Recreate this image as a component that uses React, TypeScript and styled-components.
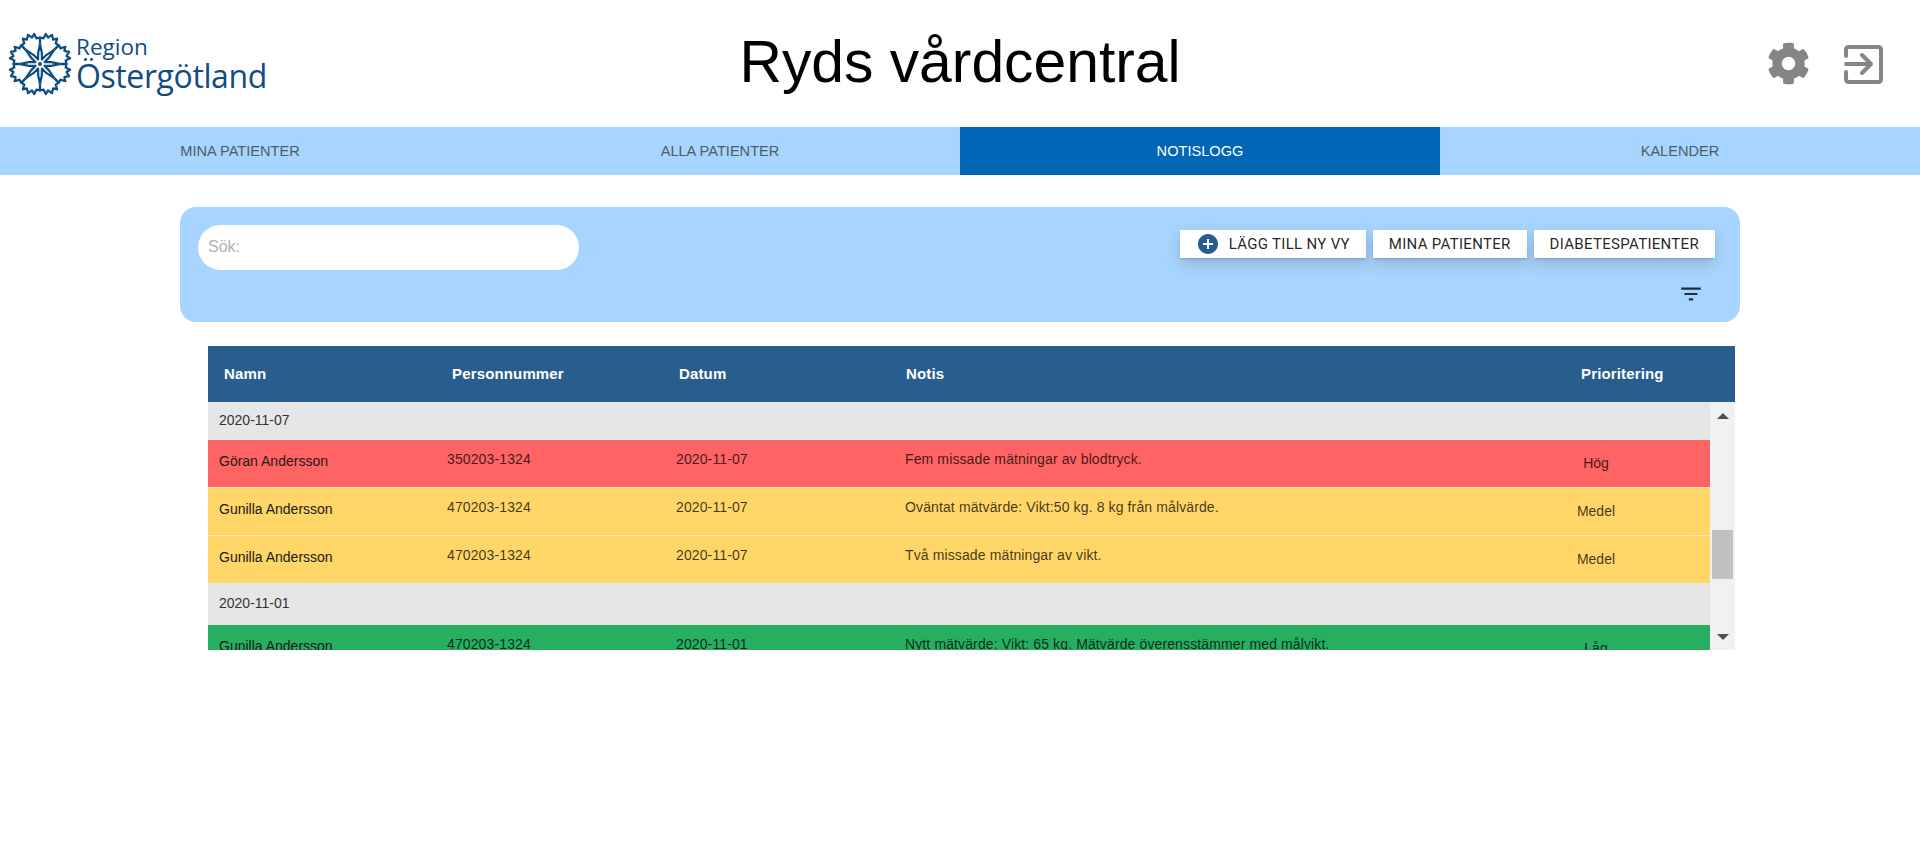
import React from 'react'
import styled, { createGlobalStyle } from 'styled-components'
import { FaCog } from 'react-icons/fa'
import { MdAddCircle, MdFilterList } from 'react-icons/md'

const tabs = ['Mina patienter', 'Alla patienter', 'Notislogg', 'Kalender']

type Level = 'high' | 'mid' | 'low'

const groups: { date: string; height: number; rows: { name: string; id: string; note: string; level: Level; label: string }[] }[] = [
	{
		date: '2020-11-07',
		height: 38,
		rows: [
			{ name: 'Göran Andersson', id: '350203-1324', note: 'Fem missade mätningar av blodtryck.', level: 'high', label: 'Hög' },
			{ name: 'Gunilla Andersson', id: '470203-1324', note: 'Oväntat mätvärde: Vikt:50 kg. 8 kg från målvärde.', level: 'mid', label: 'Medel' },
			{ name: 'Gunilla Andersson', id: '470203-1324', note: 'Två missade mätningar av vikt.', level: 'mid', label: 'Medel' },
		],
	},
	{
		date: '2020-11-01',
		height: 42,
		rows: [
			{ name: 'Gunilla Andersson', id: '470203-1324', note: 'Nytt mätvärde: Vikt: 65 kg. Mätvärde överensstämmer med målvikt.', level: 'low', label: 'Låg' },
		],
	},
]

const levelColors: Record<Level, string> = { high: '#ff6464', mid: '#ffd667', low: '#27ae60' }

function Flower() {
	const petal = 'M0 -5 L-2.6 -11 L-7.4 -18 L-10 -24.5 L-6.6 -25 L-6.2 -30 L-2.8 -27.5 L0 -31.5 L2.8 -27.5 L6.2 -30 L6.6 -25 L10 -24.5 L7.4 -18 L2.6 -11 Z'
	return (
		<svg width="66" height="66" viewBox="-33 -33 66 66" fill="none" stroke="#0f4c81" strokeWidth="2.2" strokeLinejoin="round">
			{[22.5, 67.5, 112.5, 157.5, 202.5, 247.5, 292.5, 337.5].map((angle) => (
				<path key={angle} d={petal} fill="#fff" transform={`rotate(${angle})`} />
			))}
			<circle r="2" fill="#0f4c81" stroke="none" />
		</svg>
	)
}

function ExitIcon() {
	return (
		<svg width="40" height="40" viewBox="0 0 40 40" fill="none" stroke="#858585" strokeWidth="4" strokeLinecap="round" strokeLinejoin="round">
			<path d="M3 12 V6 Q3 3 6 3 H35 Q38 3 38 6 V35 Q38 38 35 38 H6 Q3 38 3 35 V28" />
			<path d="M3 20 H27 M19 11 L28 20 L19 29" />
		</svg>
	)
}

export default function App() {
	return (
		<>
			<GlobalStyle />
			<Header>
				<LogoBox>
					<Flower />
					<LogoText>
						<LogoSmall>Region</LogoSmall>
						<LogoBig>Östergötland</LogoBig>
					</LogoText>
				</LogoBox>
				<Title>Ryds vårdcentral</Title>
				<HeaderIcons>
					<FaCog size={43} color="#858585" />
					<ExitIcon />
				</HeaderIcons>
			</Header>
			<TabBar>
				{tabs.map((tab) => (
					<Tab key={tab} $active={tab === 'Notislogg'}>
						{tab}
					</Tab>
				))}
			</TabBar>
			<Main>
				<SearchPanel>
					<PanelTop>
						<SearchInput placeholder="Sök:" />
						<ViewButtons>
							<ViewButton>
								<MdAddCircle size={24} color="#285e8e" />
								<AddLabel>Lägg till ny vy</AddLabel>
							</ViewButton>
							<ViewButton>Mina patienter</ViewButton>
							<ViewButton>Diabetespatienter</ViewButton>
						</ViewButtons>
					</PanelTop>
					<FilterRow>
						<MdFilterList size={26} color="#1f2d3d" />
					</FilterRow>
				</SearchPanel>
				<Table>
					<TableHead>
						<span>Namn</span>
						<span>Personnummer</span>
						<span>Datum</span>
						<span>Notis</span>
						<span>Prioritering</span>
					</TableHead>
					<TableBody>
						<Rows>
							{groups.map((group) => (
								<React.Fragment key={group.date}>
									<DateRow $height={group.height}>{group.date}</DateRow>
									{group.rows.map((row, i) => (
										<Row key={i} $level={row.level}>
											<NameCell>{row.name}</NameCell>
											<Cell>{row.id}</Cell>
											<Cell>{group.date}</Cell>
											<Cell>{row.note}</Cell>
											<PriorityCell>{row.label}</PriorityCell>
										</Row>
									))}
								</React.Fragment>
							))}
						</Rows>
						<ScrollTrack>
							<ArrowUp />
							<ScrollThumb />
							<ArrowDown />
						</ScrollTrack>
					</TableBody>
				</Table>
			</Main>
		</>
	)
}

const GlobalStyle = createGlobalStyle`
	body {
		margin: 0;
		background: #fff;
		font-family: 'Liberation Sans', Arial, sans-serif;
	}
`

const Header = styled.header`
	display: grid;
	grid-template-columns: 1fr auto 1fr;
	align-items: center;
	height: 127px;
`

const LogoBox = styled.div`
	display: flex;
	align-items: center;
	gap: 3px;
	padding-left: 7px;
	color: #0f4c81;
`

const LogoText = styled.div`
	display: flex;
	flex-direction: column;
	font-family: 'Open Sans', sans-serif;
`

const LogoSmall = styled.span`
	font-size: 22.5px;
	line-height: 24px;
`

const LogoBig = styled.span`
	font-size: 32px;
	line-height: 34px;
	letter-spacing: -0.4px;
`

const Title = styled.h1`
	margin: 0 0 5px;
	font-size: 58.8px;
	font-weight: 400;
	color: #000;
`

const HeaderIcons = styled.div`
	display: flex;
	justify-content: flex-end;
	align-items: center;
	gap: 33px;
	padding-right: 37px;
`

const TabBar = styled.nav`
	display: grid;
	grid-template-columns: repeat(4, 1fr);
	height: 48px;
	background: #a8d5ff;
`

const Tab = styled.div<{ $active?: boolean }>`
	display: flex;
	align-items: center;
	justify-content: center;
	font-size: 14.6px;
	text-transform: uppercase;
	color: ${(p) => (p.$active ? '#fff' : '#4f5b66')};
	background: ${(p) => (p.$active ? '#0066b5' : 'transparent')};
`

const Main = styled.main`
	padding: 32px 180px 0;
`

const SearchPanel = styled.section`
	height: 115px;
	padding: 18px 25px 0 18px;
	box-sizing: border-box;
	background: #a8d5ff;
	border-radius: 16px;
`

const PanelTop = styled.div`
	display: flex;
	justify-content: space-between;
	align-items: flex-start;
`

const SearchInput = styled.input`
	width: 381px;
	height: 45px;
	box-sizing: border-box;
	padding: 0 10px 1px;
	border: 0;
	outline: 0;
	border-radius: 23px;
	font-size: 16px;
	font-family: inherit;
	background: #fff;

	&::placeholder {
		color: #b0b0b0;
	}
`

const ViewButtons = styled.div`
	display: flex;
	gap: 7px;
	padding-top: 5px;
`

const ViewButton = styled.button`
	display: flex;
	align-items: center;
	height: 28px;
	padding: 0 16px;
	border: 0;
	background: #fff;
	color: rgba(0, 0, 0, 0.87);
	font-family: Roboto, sans-serif;
	font-size: 15px;
	letter-spacing: 0.3px;
	text-transform: uppercase;
	box-shadow:
		0 3px 1px -2px rgba(0, 0, 0, 0.08),
		0 2px 2px 0 rgba(0, 0, 0, 0.06),
		0 6px 16px 0 rgba(0, 0, 0, 0.16);
`

const AddLabel = styled.span`
	margin-left: 9px;
`

const FilterRow = styled.div`
	display: flex;
	justify-content: flex-end;
	padding: 11px 11px 0 0;
`

const Table = styled.div`
	margin: 24px 5px 0 28px;
`

const TableHead = styled.div`
	display: grid;
	grid-template-columns: 228px 227px 227px 675px 1fr;
	align-items: center;
	height: 56px;
	padding: 0 0 2px 16px;
	box-sizing: border-box;
	background: #285e8e;
	color: #fff;
	font-size: 15px;
	font-weight: 700;
	letter-spacing: 0.15px;
`

const TableBody = styled.div`
	display: flex;
	height: 248px;
	overflow: hidden;
`

const Rows = styled.div`
	flex: 1;
`

const DateRow = styled.div<{ $height: number }>`
	display: flex;
	align-items: center;
	height: ${(p) => p.$height}px;
	padding: 0 0 3px 11px;
	box-sizing: border-box;
	background: #e6e6e6;
	color: #333;
	font-size: 14px;
`

const Row = styled.div<{ $level: Level }>`
	display: grid;
	grid-template-columns: 228px 229px 229px 631px 120px;
	align-items: center;
	height: 47px;
	padding-left: 11px;
	background: ${(p) => levelColors[p.$level]};
	color: rgba(0, 0, 0, 0.75);
	font-size: 14px;

	& + & {
		border-top: 1px solid #f5e9c6;
	}
`

const Cell = styled.div`
	padding-bottom: 9px;
	letter-spacing: 0.12px;
`

const NameCell = styled.div`
	padding-bottom: 5px;
	color: #1a1a1a;
`

const PriorityCell = styled.div`
	padding-bottom: 1px;
	text-align: center;
`

const ScrollTrack = styled.div`
	display: flex;
	flex-direction: column;
	align-items: center;
	width: 25px;
	background: #f1f1f1;
`

const ArrowUp = styled.div`
	margin-top: 11px;
	border: 6px solid transparent;
	border-top: 0;
	border-bottom-color: #505050;
`

const ArrowDown = styled.div`
	margin-top: 55px;
	border: 6px solid transparent;
	border-bottom: 0;
	border-top-color: #505050;
`

const ScrollThumb = styled.div`
	width: 21px;
	height: 49px;
	margin-top: 111px;
	background: #c1c1c1;
`
